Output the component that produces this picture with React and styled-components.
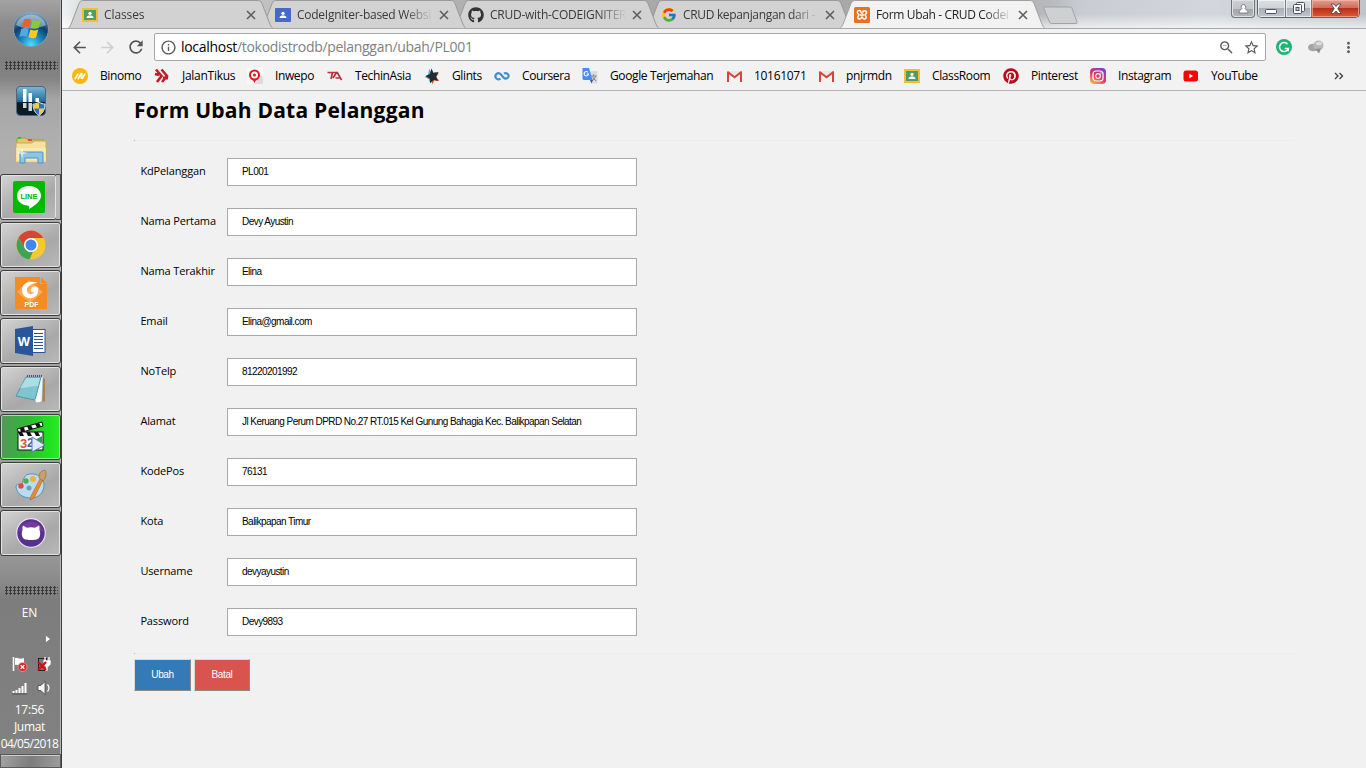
import React from "react";
import styled, { createGlobalStyle } from "styled-components";
import { FaGithub, FaPinterest } from "react-icons/fa";
import { FcGoogle } from "react-icons/fc";
import {
  MdArrowBack, MdArrowForward, MdRefresh, MdInfoOutline, MdZoomOut, MdStarBorder, MdMoreVert,
} from "react-icons/md";

const GlobalStyle = createGlobalStyle`
  * { box-sizing: border-box; }
  body { margin: 0; background: #f1f1f1; font-family: "Open Sans", "Noto Sans", sans-serif; overflow: hidden; }
  svg { display: block; flex: none; }
`;

const Screen = styled.div`
  display: flex;
  width: 1366px;
  height: 768px;
  overflow: hidden;
`;

/* ---------- Taskbar ---------- */

const Taskbar = styled.aside`
  display: flex;
  flex-direction: column;
  width: 62px;
  height: 768px;
  flex: none;
  border-right: 1px solid #3c3c3c;
  box-shadow: inset -1px 0 0 #b4b4b4;
  background: linear-gradient(180deg, #a3a3a3 0, #8b8b8b 24px, #7e7e7e 60px, #838383 78px, #a6a6a6 100px, #b0b0b0 150px, #adadad 230px, #a0a0a0 420px, #959595 560px, #8b8b8b 580px, #7d7d7d 600px, #828282 768px);
`;

const StartArea = styled.div`
  display: flex;
  justify-content: center;
  align-items: center;
  height: 57px;
`;

const Grip = styled.div`
  height: 9px;
  margin: ${(p) => p.$margin};
  background-image: radial-gradient(circle at 1.5px 1.5px, #3b3b3b 1px, transparent 1.4px);
  background-size: 4px 3px;
`;

const Pinned = styled.div`
  display: flex;
  justify-content: center;
  align-items: center;
  height: ${(p) => p.$h}px;
`;

const TaskList = styled.div`
  display: flex;
  flex-direction: column;
  gap: 2px;
`;

const TaskSlot = styled.div`
  display: flex;
  height: 46px;
  width: 61px;
`;

const TaskButton = styled.div`
  display: flex;
  justify-content: center;
  align-items: center;
  flex: 1;
  border: 1px solid #3d3d3d;
  border-radius: 3px;
  box-shadow: inset 0 0 0 1px ${(p) => (p.$active ? "#7dff7d" : "#e2e2e2")};
  background: ${(p) =>
    p.$active
      ? "linear-gradient(90deg, #4f9a57 0, #35b43a 40%, #1fe01f 80%, #2bea2b 100%)"
      : "linear-gradient(150deg, #d4d4d4 0, #b9b9b9 35%, #a8a8a8 60%, #b9b9b9 100%)"};
`;

const StackEdge = styled.div`
  width: 5px;
  margin-left: -1px;
  border: 1px solid #4a4a4a;
  border-left: 0;
  background: #b5b5b5;
`;

const Tray = styled.div`
  display: flex;
  flex-direction: column;
  align-items: center;
  width: 59px;
  color: #fff;
  font-size: 12px;
`;

const TrayText = styled.div`
  height: ${(p) => p.$h}px;
  line-height: ${(p) => p.$h}px;
  letter-spacing: ${(p) => p.$ls || 0}px;
  white-space: nowrap;
`;

const TrayRow = styled.div`
  display: flex;
  align-items: center;
  justify-content: ${(p) => (p.$end ? "flex-end" : "center")};
  gap: 7px;
  width: 59px;
  height: ${(p) => p.$h}px;
  padding-right: ${(p) => (p.$end ? 8 : 0)}px;
  padding-left: ${(p) => (p.$end ? 0 : 4)}px;
`;

const ShowDesktop = styled.div`
  height: 14px;
  width: 61px;
  margin-top: auto;
  border: 1px solid #5a5a5a;
  box-shadow: inset 0 1px 0 #c9c9c9;
  background: linear-gradient(100deg, #a2a2a2, #7d7d7d 50%, #9c9c9c);
`;

/* ---------- Browser chrome ---------- */

const Browser = styled.main`
  display: flex;
  flex-direction: column;
  width: 1304px;
`;

const TabStrip = styled.div`
  display: flex;
  height: 28px;
  padding-left: 6px;
  background:
    linear-gradient(180deg, rgba(255,255,255,0) 50%, rgba(255,255,255,.65) 100%),
    linear-gradient(90deg, #eef1f4 0, #d4d4d4 30px, #bdbdbd 240px, #a9a9a9 500px, #a8a8a8 860px, #b6b8bb 985px, #c9ccd2 1020px, #d3d6db 1150px, #bfc3ca 1304px);
`;

const Tab = styled.div`
  display: grid;
  grid-template-columns: 205px;
  grid-template-rows: 28px;
  width: 205px;
  margin-right: -12px;
  flex: none;
  z-index: ${(p) => p.$z};
  > * { grid-area: 1 / 1; }
`;

const TabBody = styled.div`
  display: flex;
  align-items: center;
  padding: 2px 16px 0 14px;
  z-index: 1;
`;

const TabTitle = styled.span`
  width: 138px;
  margin: 0 4px 1px 6px;
  white-space: nowrap;
  font-size: 12px;
  letter-spacing: ${(p) => p.$ls}px;
  color: ${(p) => (p.$active ? "#222" : "#3a3a3a")};
  mask-image: linear-gradient(90deg, #000 108px, transparent 136px);
`;

const NewTab = styled.div`
  padding: 6px 0 0 9px;
`;

const WindowControls = styled.div`
  display: flex;
  margin-left: auto;
  padding-right: 6px;
  align-items: flex-start;
`;

const ProfileButton = styled.div`
  display: flex;
  justify-content: center;
  align-items: center;
  width: 24px;
  height: 18px;
  margin-right: 2px;
  border: 1px solid #6f747c;
  border-top: 0;
  border-radius: 0 0 4px 4px;
  box-shadow: inset 0 0 0 1px #dfe2e6;
  background: linear-gradient(#cdcfd2 0, #c2c4c8 50%, #a4a7ab 55%, #b4b6ba 100%);
`;

const ControlGroup = styled.div`
  display: flex;
  width: 103px;
  height: 18px;
  border: 1px solid #5d626b;
  border-top: 0;
  border-radius: 0 0 5px 5px;
  overflow: hidden;
`;

const ControlButton = styled.div`
  display: flex;
  justify-content: center;
  align-items: center;
  width: ${(p) => p.$w}px;
  border-right: ${(p) => (p.$close ? "0" : "1px solid #777c85")};
  box-shadow: inset 0 0 0 1px ${(p) => (p.$close ? "rgba(255,190,170,.6)" : "rgba(255,255,255,.6)")};
  background: ${(p) =>
    p.$close
      ? "linear-gradient(#dfa194 0, #cf6c58 45%, #b9301a 50%, #d95c37 100%)"
      : "linear-gradient(#dcdee2 0, #d0d3d8 45%, #aaaeb5 50%, #c3c6cc 100%)"};
`;

const Toolbar = styled.div`
  display: flex;
  align-items: center;
  height: 37px;
  padding: 0 9px;
  border-top: 1px solid #a8a8a8;
  background: #f2f2f2;
`;

const NavButton = styled.span`
  display: flex;
  width: 28px;
  margin-left: -1px;
  margin-right: 1px;
  color: ${(p) => (p.$muted ? "#cfcfcf" : "#555")};
`;

const Omnibox = styled.div`
  display: flex;
  align-items: center;
  width: 1112px;
  height: 28px;
  margin-left: -1px;
  padding: 0 5px;
  border: 1px solid #a9a9a9;
  border-radius: 2px;
  background: #fff;
  color: #5a5a5a;
`;

const Url = styled.span`
  flex: 1;
  margin: 0 0 1px 4px;
  font-size: 14px;
  line-height: 20px;
  letter-spacing: -0.3px;
  color: #808080;
  b { font-weight: 400; color: #000; }
`;

const OmniboxActions = styled.span`
  display: flex;
  gap: 8px;
`;

const Extensions = styled.div`
  display: flex;
  align-items: center;
  gap: 16px;
  margin-left: 10px;
  color: #5a5a5a;
`;

const BookmarkBar = styled.div`
  display: flex;
  align-items: center;
  height: 26px;
  padding: 0 22px 4px 10px;
  border-bottom: 1px solid #b4b4b4;
  background: #f2f2f2;
`;

const Bookmark = styled.div`
  display: flex;
  align-items: center;
  gap: 12px;
  flex: none;
  width: ${(p) => p.$w}px;
  font-size: 12px;
  line-height: 16px;
  letter-spacing: ${(p) => p.$ls ?? -0.38}px;
  white-space: nowrap;
  color: #000;
`;

const Overflow = styled.div`
  margin-left: auto;
  color: #444;
`;

/* ---------- Page ---------- */

const Page = styled.section`
  flex: 1;
  padding: 5px 72px 0;
  background: #f1f1f1;
`;

const Title = styled.h1`
  margin: 0;
  height: 44px;
  font-size: 21px;
  font-weight: 700;
  line-height: 29px;
  letter-spacing: 0.22px;
  color: #000;
`;

const Divider = styled.hr`
  height: 1px;
  margin: 0;
  border: 0;
  border-left: 1px solid #b5b5b5;
  background: #ececec;
`;

const Form = styled.form`
  display: flex;
  flex-direction: column;
  gap: 22px;
  padding: 17px 6px;
`;

const Field = styled.label`
  display: flex;
  align-items: center;
  height: 28px;
`;

const FieldName = styled.span`
  width: 87px;
  padding: 0 0 3px 0.4px;
  font-size: 11px;
  letter-spacing: -0.14px;
  color: #000;
`;

const Input = styled.input`
  width: 410px;
  height: 28px;
  padding: 0 14px 1px;
  border: 1px solid #a9a9a9;
  border-radius: 0;
  background: #fff;
  color: #000;
  font: 10px "Liberation Sans", Arial, sans-serif;
  letter-spacing: -0.55px;
`;

const Actions = styled.div`
  display: flex;
  gap: 3px;
  padding-top: 5px;
`;

const ActionButton = styled.button`
  width: ${(p) => p.$w}px;
  height: 32px;
  padding: 0 0 1px;
  border: 1px solid;
  border-color: #d9d9d9 #8a8a8a #8a8a8a #d9d9d9;
  background: ${(p) => p.$bg};
  color: #fff;
  font: 10px "Liberation Sans", Arial, sans-serif;
  letter-spacing: -0.4px;
`;

/* ---------- Drawings ---------- */

const StartOrb = () => (
  <svg width="38" height="38" viewBox="0 0 38 38">
    <defs>
      <radialGradient id="orb" cx=".5" cy=".95" r=".95">
        <stop offset="0" stopColor="#4fe0ff" /><stop offset=".3" stopColor="#1a8fc4" />
        <stop offset=".62" stopColor="#0b3f6e" /><stop offset="1" stopColor="#8fb3cc" />
      </radialGradient>
    </defs>
    <circle cx="19" cy="19" r="17.500" fill="url(#orb)" stroke="#8c9aa6" />
    <path d="M4 15a15.500 14 0 0 1 30 0c-8 4-22 5-30 0z" fill="#cfe2ee" opacity=".5" />
    <path d="M12 9.500c2.500-1.200 4.500-1 7 0l-1.800 8c-2.500-1-5-1-7.500 0z" fill="#e8602c" />
    <path d="M20.500 10c3 1.500 5 1.300 8.500-.3l-2.300 8c-2.500 1.200-5 1.300-8 0z" fill="#8fc640" />
    <path d="M9.300 19c2.700-1.200 5-1.200 7.500 0l-2 8c-2.500-1.200-5-1.200-7.500 0z" fill="#56a8e2" />
    <path d="M18.300 19.500c3 1.300 5.300 1.200 8 0l-2.200 8c-3 1.300-5 1-7.700-.2z" fill="#fdc82f" />
  </svg>
);

const ShieldApp = () => (
  <svg width="30" height="30" viewBox="0 0 30 30">
    <defs><linearGradient id="blu" x2="0" y2="1"><stop stopColor="#79b6d8" /><stop offset="1" stopColor="#1c6a98" /></linearGradient></defs>
    <rect x=".5" y=".5" width="29" height="29" rx="4" fill="#0c1a24" stroke="#4a6a80" />
    <path d="M1 16V4a3 3 0 0 1 3-3h22a3 3 0 0 1 3 3v12z" fill="url(#blu)" />
    <path d="M7 3h3.500v13H7zM12.500 7H16v9h-3.500zM19.500 12h3.500v4h-3.500z" fill="#fff" />
    <path d="M7 17h3.500v5H7zM12.500 17H16v8h-3.500z" fill="#cfd6da" />
    <path d="M23 16c2 1.600 4 2 6 2 0 5.500-2 9-6 11.500-4-2.500-6-6-6-11.500 2 0 4-.4 6-2z" fill="#2f6fd0" stroke="#e5eef5" />
    <path d="M23 17v5.500h-5.200c-.3-1.500-.3-2.500-.3-4 2 0 4-.6 5.500-1.500zM23 22.500h5.200c-.8 3-2.500 5-5.200 6.500z" fill="#f8cf2c" />
  </svg>
);

const FolderApp = () => (
  <svg width="34" height="30" viewBox="0 0 34 30">
    <path d="M3 3h9l2 2h16v20H3z" fill="#e3c56a" stroke="#b59545" />
    <path d="M4 2h3v2H4z" fill="#39b54a" /><path d="M14 4h4v2h-4z" fill="#e24d3a" /><path d="M21 6h5v2h-5z" fill="#3a8fd8" />
    <path d="M2 8h16l2-2h12v20H2z" fill="#f6e2a0" stroke="#c8a95a" />
    <path d="M2 13h30v14H2z" fill="#fbeeb8" opacity=".7" />
    <path d="M6 28V18q0-1 1-1h21q1 0 1 1v10h-5v-5H11v5z" fill="#8cc6e6" stroke="#4c93bd" />
    <path d="M8 12l1 5 5 1-5 1-1 5-1-5-4-1 4-1z" fill="#fff" opacity=".7" />
  </svg>
);

const LineApp = () => (
  <svg width="32" height="32" viewBox="0 0 32 32">
    <rect width="32" height="32" rx="2" fill="#00b900" />
    <path d="M16 5c7 0 12 4.200 12 9.800 0 4.200-4 8.700-12 13.200.6-2 .3-3-.8-3.300C8.500 24.200 4 20.300 4 14.800 4 9.200 9 5 16 5z" fill="#fff" />
    <text x="16" y="17.600" textAnchor="middle" fontFamily="Liberation Sans" fontWeight="700" fontSize="7.500" fill="#00b900">LINE</text>
  </svg>
);

const ChromeApp = () => (
  <svg width="30" height="30" viewBox="0 0 30 30">
    <circle cx="15" cy="15" r="14.500" fill="#f6c82f" />
    <path d="M2.500 7.700A14.500 14.500 0 0 1 27.600 8H15a7 7 0 0 0-6 10.500z" fill="#d9443a" />
    <path d="M2.500 7.700 9 18.500a7 7 0 0 0 8 3.200L13.500 29.400A14.500 14.500 0 0 1 2.500 7.700z" fill="#3fa257" />
    <circle cx="15" cy="15" r="7" fill="#fff" /><circle cx="15" cy="15" r="5.500" fill="#4285f4" />
  </svg>
);

const PdfApp = () => (
  <svg width="32" height="32" viewBox="0 0 32 32">
    <path d="M0 0h25v7h7v25H0z" fill="#f68b1f" /><path d="M26 0l6 6h-6z" fill="#f68b1f" />
    <path d="M2 15 14 3l14 12-13 11z" fill="#f9ab5b" />
    <path d="M23 6c-7-3-16-1-16 7 0 6 5 9 10 8s7-6 6-10c-2-2-6-2-7 1-1 2 1 4 3 3-1 3-6 3-7-1-1-5 5-8 11-8z" fill="#fff" />
    <text x="16.500" y="30" textAnchor="middle" fontFamily="Liberation Sans" fontWeight="700" fontSize="7" fill="#fff">PDF</text>
  </svg>
);

const WordApp = () => (
  <svg width="31" height="32" viewBox="0 0 31 32">
    <rect x="15" y="4.500" width="15" height="23" fill="#fff" stroke="#2a5699" />
    <path d="M19 8.500h9M19 11.500h9M19 14.500h9M19 17.500h9M19 20.500h9M19 23.500h9" stroke="#2a5699" />
    <path d="M0 4 18 1v30L0 28z" fill="#2a5699" />
    <text x="9" y="21" textAnchor="middle" fontFamily="Liberation Sans" fontWeight="700" fontSize="13" fill="#fff">W</text>
  </svg>
);

const NotepadApp = () => (
  <svg width="32" height="30" viewBox="0 0 32 30">
    <path d="M27 3l3 2v22l-5 2z" fill="#a8824c" />
    <path d="M12 2h16l-1 26-6 1z" fill="#eef6f8" stroke="#9ab" strokeWidth=".6" />
    <path d="M11 3h15l-6 23L1 22z" fill="#7fc4cf" stroke="#4c98a6" />
    <path d="M11 4h14l-2 8C17 12 10 14 5 14z" fill="#bde5ea" opacity=".75" />
    <path d="M20 26l4-5 1 7z" fill="#fff" />
    <path d="M12 2h15" stroke="#555" strokeWidth="2" strokeDasharray="1 1" />
  </svg>
);

const PlayerApp = () => (
  <svg width="32" height="32" viewBox="0 0 32 32">
    <path d="M2 8 27 1l1 4L4 12z" fill="#fff" stroke="#111" />
    <path d="M5 7.300l4-1 1 4-4 1.200zM12 5.300l4-1.100 2 3.800-4 1.200zM20 3l4-1 2 3.400-4 1.200z" fill="#111" />
    <rect x="3" y="11" width="25" height="18" fill="#fff" stroke="#111" />
    <path d="M3 11h4l2 4H5zM11 11h4l2 4h-4zM19 11h4l2 4h-4z" fill="#111" />
    <text x="5" y="27" fontFamily="Liberation Sans" fontWeight="700" fontSize="13" fill="#d9592b">3</text>
    <text x="12" y="26" fontFamily="Liberation Sans" fontWeight="700" fontSize="12" fill="#2b67b0">2</text>
    <path d="M20 19l7-4v9z" fill="#2fa23a" />
    <path d="M17 16l13 8-13 7z" fill="#dfe8ff" stroke="#5479c4" />
  </svg>
);

const PaintApp = () => (
  <svg width="32" height="32" viewBox="0 0 32 32">
    <path d="M14 5c8-1 15 3 15 11 0 7-5 13-13 13S2 25 1 18c0-3 3-3 5-2S7 6 14 5z" fill="#b9dcf0" stroke="#5b94b8" />
    <circle cx="6" cy="17" r="2.700" fill="#e04b3c" /><circle cx="11" cy="12" r="2.700" fill="#4fae48" />
    <circle cx="18" cy="10" r="3" fill="#f3b32b" /><circle cx="14" cy="19" r="2.500" fill="#6f9cb5" />
    <path d="M25 10l3 1-9 18-4 2 1-4z" fill="#ea8a2d" stroke="#b5651d" strokeWidth=".6" />
    <path d="M24 9c0-4 1-7 6-8 2 3 1 8-2 11z" fill="#c9a06c" stroke="#8a6538" strokeWidth=".6" />
  </svg>
);

const GithubDesktopApp = () => (
  <svg width="30" height="30" viewBox="0 0 30 30">
    <circle cx="15" cy="15" r="14.300" fill="#58308e" stroke="#e9e1f2" strokeWidth="1.200" />
    <path d="M2.500 13a13 13 0 0 1 25 0z" fill="#8a3fa8" opacity=".6" />
    <path d="M7 7.500l4 2.300a17 17 0 0 1 8 0l4-2.300c.8 2 .6 3 .3 4 1.200 2.500 1.200 6 0 8-1 1.800-3 2.500-8.300 2.500s-7.300-.7-8.300-2.500c-1.200-2-1.200-5.500 0-8-.3-1-.5-2 .3-4z" fill="#fff" />
  </svg>
);

const ClassroomIcon = ({ bg, frame }) => (
  <svg width="16" height="14" viewBox="0 0 16 14">
    <rect width="16" height="14" rx=".8" fill={frame} />
    <rect x="2" y="2" width="12" height="10" fill={bg} />
    <circle cx="8" cy="5.300" r="1.600" fill="#fff" /><path d="M4.500 10c0-1.800 1.800-2.400 3.500-2.400s3.500.6 3.500 2.400z" fill="#fff" />
  </svg>
);

const XamppIcon = () => (
  <svg width="16" height="16" viewBox="0 0 16 16">
    <rect width="16" height="16" rx="1.500" fill="#e96f22" />
    <path d="M5 3.500a1.800 1.800 0 0 0-1 3.200L5 8 4 9.300a1.800 1.800 0 0 0 2.800 2.200L8 10l1.200 1.500A1.800 1.800 0 0 0 12 9.300L11 8l1-1.300a1.800 1.800 0 0 0-2.800-2.400Q9 6.500 8 6.500T6.800 4.300A2 2 0 0 0 5 3.500zM6 8h4" fill="none" stroke="#fff" strokeWidth="1.500" />
  </svg>
);

const GmailIcon = () => (
  <svg width="15" height="16" viewBox="0 0 15 16">
    <path d="M0 3h15v11H0z" fill="#ebe7e6" /><path d="M2 14V6l5.500 4L13 6v8z" fill="#f5f3f2" />
    <path d="M0 4v10h2V6.200l5.500 4.200L13 6.200V14h2V3.500L14 3 7.500 8 1 3z" fill="#d5463a" />
  </svg>
);

const BinomoIcon = () => (
  <svg width="16" height="16" viewBox="0 0 16 16">
    <circle cx="8" cy="8" r="8" fill="#fdb70a" />
    <path d="M3.200 10.600L6 6M6.300 10.600L9 5.600M9.800 5.600L9.300 9.500Q9.300 10.800 10.500 10L12.800 6" fill="none" stroke="#fff" strokeWidth="1.600" strokeLinecap="round" />
  </svg>
);

const JalanTikusIcon = () => (
  <svg width="16" height="16" viewBox="0 0 16 16">
    <path d="M2 1.500L7.500 8 3 14M1 6l4 1M7.500 1.500L13 8l-5 6M9 9.500l5 1" fill="none" stroke="#c01d28" strokeWidth="2.600" />
  </svg>
);

const InwepoIcon = () => (
  <svg width="16" height="16" viewBox="0 0 16 16">
    <path d="M0 0h16v16H0z" fill="#f9f9f9" /><path d="M10 4l6 5v7H9z" fill="#dcdcdc" />
    <path d="M5 10h5l-2.500 5z" fill="#e01b22" />
    <circle cx="7.500" cy="7" r="4.500" fill="#fff" stroke="#e8141c" strokeWidth="2" /><circle cx="7.500" cy="7" r="1.500" fill="#e8141c" />
  </svg>
);

const TechInAsiaIcon = () => (
  <svg width="16" height="16" viewBox="0 0 16 16">
    <path d="M.5 4.500h5L4 11M5 4.500l4.500 0L6 10M10 4l4.500 8M8.500 10h4" fill="none" stroke="#b5343f" strokeWidth="1.700" />
  </svg>
);

const GlintsIcon = () => (
  <svg width="16" height="16" viewBox="0 0 16 16">
    <path d="M6.500 1l2.500 4 5-1-2.500 4.500 3 3.500-5-.2L7.500 15.500 6 11 2 9l3.500-2.600z" fill="#22c0d8" transform="translate(-1.300 0)" />
    <path d="M6.500 1l2.500 4 5-1-2.500 4.500 3 3.500-5-.2L7.500 15.500 6 11 2 9l3.500-2.600z" fill="#e0522c" transform="translate(.8 .8)" />
    <path d="M7.500.5l2 4.500 5-1-2.500 4.500 2 4.500-4-1.200-4 3.200L6 10.500 1.500 8 6 6z" fill="#222b33" />
  </svg>
);

const CourseraIcon = () => (
  <svg width="16" height="16" viewBox="0 0 16 16">
    <path d="M6.500 10.500A3 3 0 1 1 6 5.700C8 7 8.500 9.500 11.500 10.700a2.800 2.800 0 1 0-1.500-5" fill="none" stroke="#3f8fcf" strokeWidth="2.200" />
  </svg>
);

const TranslateIcon = () => (
  <svg width="16" height="16" viewBox="0 0 16 16">
    <path d="M6 3h9.500v12.500H9z" fill="#dcdcdc" /><path d="M9 8h5.500M11.500 6.500V8M13.500 8c-.5 2.500-2 3.700-3.500 4.500M10.500 9l3.500 4" stroke="#7c8288" fill="none" />
    <path d="M.5 0H7l3.500 12H1.500L.5 11z" fill="#4a8af4" /><path d="M8 12h3l-1.500 3.500z" fill="#2a56c6" />
    <path d="M6 4.300A2.200 2.200 0 1 0 6.500 6H4.600" fill="none" stroke="#fff" strokeWidth="1.100" />
  </svg>
);

const InstagramIcon = () => (
  <svg width="16" height="16" viewBox="0 0 16 16">
    <defs><linearGradient id="ig" x1=".2" y1="1" x2=".8" y2="0"><stop stopColor="#fdb24a" /><stop offset=".45" stopColor="#e5345f" /><stop offset="1" stopColor="#7b3fd0" /></linearGradient></defs>
    <rect width="16" height="16" rx="4" fill="url(#ig)" />
    <rect x="3" y="3" width="10" height="10" rx="3" fill="none" stroke="#fff" strokeWidth="1.200" />
    <circle cx="8" cy="8" r="2.300" fill="none" stroke="#fff" strokeWidth="1.200" /><circle cx="11" cy="5" r=".7" fill="#fff" />
  </svg>
);

const YouTubeIcon = () => (
  <svg width="16" height="16" viewBox="0 0 16 16">
    <rect x=".5" y="2.500" width="14.500" height="11" rx="2.500" fill="#f00" /><path d="M6.300 5.700v4.600L10.200 8z" fill="#fff" />
  </svg>
);

const GrammarlyIcon = () => (
  <svg width="16" height="16" viewBox="0 0 16 16">
    <circle cx="8" cy="8" r="8" fill="#1cb574" />
    <path d="M11.500 5.200a4.500 4.500 0 1 0 .8 4.300H8.700M12.300 9.500v2.700" fill="none" stroke="#fff" strokeWidth="1.500" />
  </svg>
);

const StoneIcon = () => (
  <svg width="16" height="16" viewBox="0 0 16 16">
    <ellipse cx="5" cy="8.500" rx="5" ry="3.800" fill="#a5a5a5" /><circle cx="10.500" cy="6.500" r="5" fill="#b9b9b9" />
    <path d="M7 10l4 4.500 2-5z" fill="#8d8d8d" /><ellipse cx="11" cy="4.500" rx="3" ry="1.800" fill="#dedede" />
  </svg>
);

const TabShape = ({ active }) => (
  <svg width="205" height="28" viewBox="0 0 205 28">
    <path d="M0 28.500C2 27 2.500 25 3.500 23L11 3.500Q12 .5 14.500 .5H190.500Q193 .5 194 3.500L201.500 23C202.500 25 203 27 205 28.500z"
      fill={active ? "#f2f2f2" : "#d2d2d2"} stroke={active ? "#a0a0a0" : "#999"} />
  </svg>
);

const CloseGlyph = () => (
  <svg width="10" height="10" viewBox="0 0 10 10"><path d="M1 1l8 8M9 1L1 9" stroke="#5e5e5e" strokeWidth="1.600" /></svg>
);

const FlagIcon = () => (
  <svg width="18" height="18" viewBox="0 0 18 18">
    <path d="M2.500 2v14" stroke="#fff" strokeWidth="1.500" /><path d="M4 3c3-1 4 2 9 0v7c-4 2-6-1-9 0z" fill="#fff" />
    <circle cx="11.500" cy="12" r="4.500" fill="#d92b2b" stroke="#f4b6b6" strokeWidth=".6" /><path d="M9.700 10.200l3.600 3.600M13.300 10.200l-3.600 3.600" stroke="#fff" strokeWidth="1.300" />
  </svg>
);

const PlugIcon = () => (
  <svg width="16" height="18" viewBox="0 0 16 18">
    <rect x="2.500" y="3.500" width="8" height="12" fill="#777" stroke="#222" />
    <path d="M8 6h6v3l-2 2h-2l-2-2zM9 2v4M13 2v4M11 11v4H9" fill="#fff" stroke="#fff" strokeWidth="1.300" />
    <path d="M2 7l8 8M10 7l-8 8" stroke="#e30613" strokeWidth="2.300" />
  </svg>
);

const SignalIcon = () => (
  <svg width="18" height="14" viewBox="0 0 18 14"><path d="M2.500 12v-2M5.500 12V9M8.500 12V7M11.500 12V5M14.500 12V2" stroke="#fff" strokeWidth="2" /><path d="M1 13h15" stroke="#555" /></svg>
);

const SpeakerIcon = () => (
  <svg width="16" height="16" viewBox="0 0 16 16"><path d="M2 5.500h3l4-4v13l-4-4H2z" fill="#fff" stroke="#444" strokeWidth=".8" /><path d="M11.500 4.500q3 3.500 0 7" stroke="#fff" fill="none" strokeWidth="1.200" /></svg>
);

/* ---------- Data ---------- */

const classBlue = <ClassroomIcon bg="#4668c8" frame="#4668c8" />;
const classGreen = <ClassroomIcon bg="#4f9e62" frame="#f0bf35" />;

const tabs = [
  { icon: classGreen, title: "Classes", ls: -0.1 },
  { icon: classBlue, title: "CodeIgniter-based Websi", ls: -0.25 },
  { icon: <FaGithub size={16} color="#333" />, title: "CRUD-with-CODEIGNITER", ls: -0.25 },
  { icon: <FcGoogle size={16} />, title: "CRUD kepanjangan dari -", ls: -0.33 },
  { icon: <XamppIcon />, title: "Form Ubah - CRUD Codei", ls: -0.35, active: true },
];

const bookmarks = [
  { icon: <BinomoIcon />, name: "Binomo", w: 82 },
  { icon: <JalanTikusIcon />, name: "JalanTikus", w: 93, ls: -0.28 },
  { icon: <InwepoIcon />, name: "Inwepo", w: 80 },
  { icon: <TechInAsiaIcon />, name: "TechinAsia", w: 97 },
  { icon: <GlintsIcon />, name: "Glints", w: 70 },
  { icon: <CourseraIcon />, name: "Coursera", w: 88 },
  { icon: <TranslateIcon />, name: "Google Terjemahan", w: 145 },
  { icon: <GmailIcon />, name: "10161071", w: 92, ls: -0.3 },
  { icon: <GmailIcon />, name: "pnjrmdn", w: 85 },
  { icon: classGreen, name: "ClassRoom", w: 99 },
  { icon: <FaPinterest size={16} color="#bd081c" />, name: "Pinterest", w: 87 },
  { icon: <InstagramIcon />, name: "Instagram", w: 93 },
  { icon: <YouTubeIcon />, name: "YouTube", w: 80 },
];

const fields = [
  ["KdPelanggan", "PL001"],
  ["Nama Pertama", "Devy Ayustin"],
  ["Nama Terakhir", "Elina"],
  ["Email", "Elina@gmail.com"],
  ["NoTelp", "81220201992"],
  ["Alamat", "Jl Keruang Perum DPRD No.27 RT.015 Kel Gunung Bahagia Kec. Balikpapan Selatan"],
  ["KodePos", "76131"],
  ["Kota", "Balikpapan Timur"],
  ["Username", "devyayustin"],
  ["Password", "Devy9893"],
];

const tasks = [
  { icon: <LineApp />, stacked: true },
  { icon: <ChromeApp /> },
  { icon: <PdfApp /> },
  { icon: <WordApp /> },
  { icon: <NotepadApp /> },
  { icon: <PlayerApp />, active: true },
  { icon: <PaintApp /> },
  { icon: <GithubDesktopApp /> },
];

export default function App() {
  return (
    <Screen>
      <GlobalStyle />
      <Taskbar>
        <StartArea><StartOrb /></StartArea>
        <Grip $margin="4px 3px 6px 5px" />
        <Pinned $h={50}><ShieldApp /></Pinned>
        <Pinned $h={48}><FolderApp /></Pinned>
        <TaskList>
          {tasks.map((t, i) => (
            <TaskSlot key={i}>
              <TaskButton $active={t.active}>{t.icon}</TaskButton>
              {t.stacked && <StackEdge />}
            </TaskSlot>
          ))}
        </TaskList>
        <Grip $margin="30px 3px 9px 5px" />
        <Tray>
          <TrayText $h={18}>EN</TrayText>
          <TrayRow $h={34} $end>
            <svg width="6" height="8" viewBox="0 0 6 8"><path d="M.5 0v8L5.500 4z" fill="#fff" stroke="#555" strokeWidth=".5" /></svg>
          </TrayRow>
          <TrayRow $h={16}><FlagIcon /><PlugIcon /></TrayRow>
          <TrayRow $h={31}><SignalIcon /><SpeakerIcon /></TrayRow>
          <TrayText $h={13} $ls={-0.2}>17:56</TrayText>
          <TrayText $h={22} $ls={-0.3}>Jumat</TrayText>
          <TrayText $h={12} $ls={-0.6}>04/05/2018</TrayText>
        </Tray>
        <ShowDesktop />
      </Taskbar>

      <Browser>
        <TabStrip>
          {tabs.map((t, i) => (
            <Tab key={t.title} $z={t.active ? 10 : 6 - i}>
              <TabShape active={t.active} />
              <TabBody>
                {t.icon}
                <TabTitle $ls={t.ls} $active={t.active}>{t.title}</TabTitle>
                <CloseGlyph />
              </TabBody>
            </Tab>
          ))}
          <NewTab>
            <svg width="36" height="20" viewBox="0 0 36 20">
              <path d="M3 1h25q1.500 0 2 1.500L35 16q.5 1.500-1 1.500H9.500Q8 17.500 7.500 16L2 2.500Q1.500 1 3 1z" fill="#cfd0d1" stroke="#a0a3a7" />
            </svg>
          </NewTab>
          <WindowControls>
            <ProfileButton>
              <svg width="11" height="12" viewBox="0 0 11 12"><path d="M5.500 1.500a2.300 2.300 0 0 1 1.500 4c0 1 3 1 3 4.500H1c0-3.500 3-3.500 3-4.500a2.300 2.300 0 0 1 1.500-4z" fill="#fff" stroke="#666b73" strokeWidth=".8" /></svg>
            </ProfileButton>
            <ControlGroup>
              <ControlButton $w={28}><svg width="12" height="12" viewBox="0 0 12 12"><rect x=".5" y="6.500" width="11" height="4" rx="1" fill="#fff" stroke="#4a5060" /></svg></ControlButton>
              <ControlButton $w={27}><svg width="12" height="13" viewBox="0 0 12 13"><rect x="3.500" y=".5" width="8" height="9" rx="1" fill="#fff" stroke="#4a5060" /><rect x=".5" y="2.500" width="8" height="9" rx="1" fill="#fff" stroke="#4a5060" /><rect x="3" y="5.500" width="3" height="3" fill="#c7cbd2" stroke="#4a5060" /></svg></ControlButton>
              <ControlButton $w={47} $close><svg width="12" height="12" viewBox="0 0 12 12"><path d="M1 1h3l2 2.500L8 1h3L7.800 5.700 11 10.500H8L6 8l-2 2.500H1l3.200-4.800z" fill="#fff" stroke="#4a4656" strokeWidth=".9" /></svg></ControlButton>
            </ControlGroup>
          </WindowControls>
        </TabStrip>

        <Toolbar>
          <NavButton><MdArrowBack size={19} /></NavButton>
          <NavButton $muted><MdArrowForward size={19} /></NavButton>
          <NavButton><MdRefresh size={20} /></NavButton>
          <Omnibox>
            <MdInfoOutline size={17} />
            <Url><b>localhost</b>/tokodistrodb/pelanggan/ubah/PL001</Url>
            <OmniboxActions>
              <MdZoomOut size={17} />
              <MdStarBorder size={17} />
            </OmniboxActions>
          </Omnibox>
          <Extensions>
            <GrammarlyIcon />
            <StoneIcon />
            <MdMoreVert size={17} />
          </Extensions>
        </Toolbar>

        <BookmarkBar>
          {bookmarks.map((b) => (
            <Bookmark key={b.name} $w={b.w} $ls={b.ls}>{b.icon}{b.name}</Bookmark>
          ))}
          <Overflow>
            <svg width="10" height="8" viewBox="0 0 10 8"><path d="M1 1l3 3-3 3M5.500 1l3 3-3 3" fill="none" stroke="#444" strokeWidth="1.400" /></svg>
          </Overflow>
        </BookmarkBar>

        <Page>
          <Title>Form Ubah Data Pelanggan</Title>
          <Divider />
          <Form>
            {fields.map(([name, value]) => (
              <Field key={name}>
                <FieldName>{name}</FieldName>
                <Input defaultValue={value} spellCheck={false} />
              </Field>
            ))}
          </Form>
          <Divider />
          <Actions>
            <ActionButton type="button" $w={57} $bg="#337ab7">Ubah</ActionButton>
            <ActionButton type="button" $w={56} $bg="#d9534f">Batal</ActionButton>
          </Actions>
        </Page>
      </Browser>
    </Screen>
  );
}
